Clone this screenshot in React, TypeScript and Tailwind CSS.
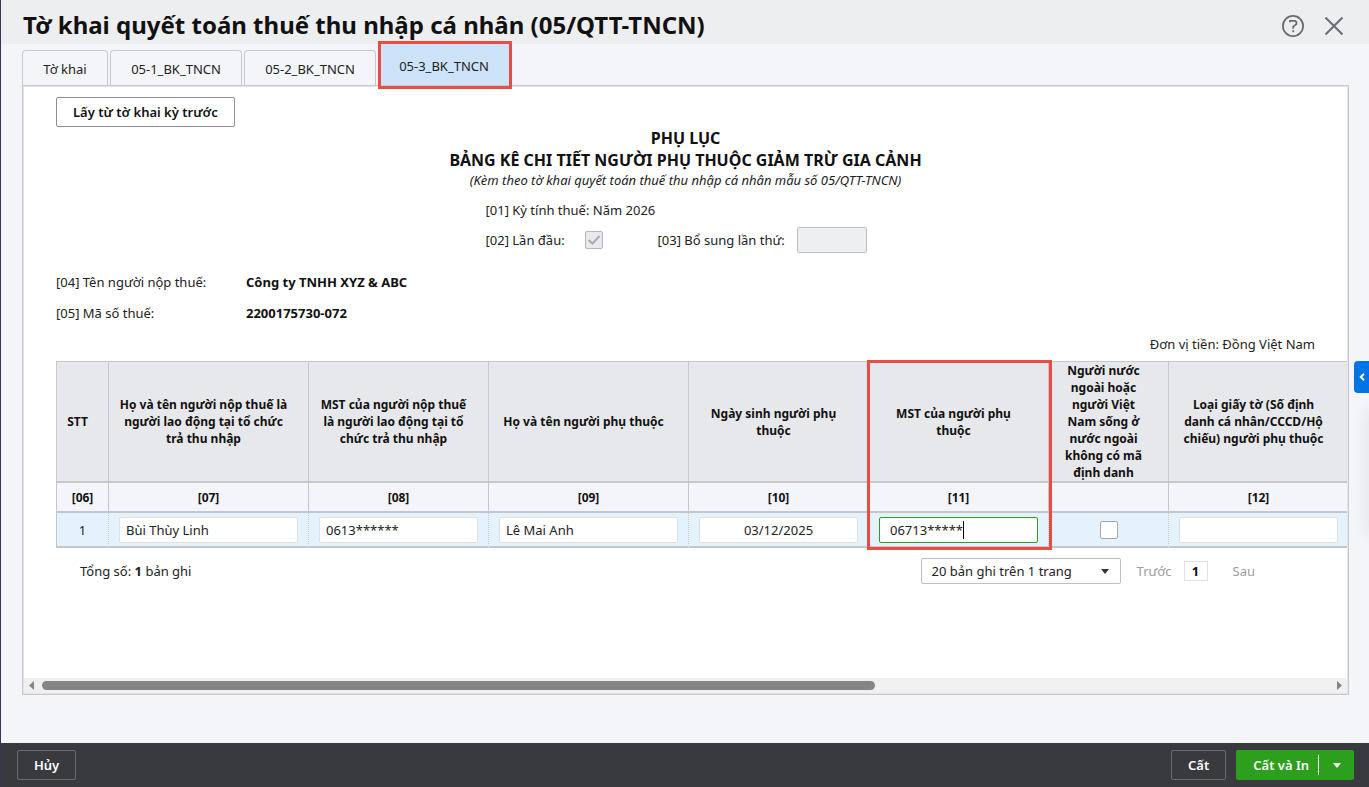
import { useState } from "react"
import { clsx } from "clsx"

const tabs = [
  { label: "Tờ khai", width: "w-[86px]" },
  { label: "05-1_BK_TNCN", width: "w-[132px]" },
  { label: "05-2_BK_TNCN", width: "w-[132px]" },
  { label: "05-3_BK_TNCN", width: "w-[132px]" },
]

const columns = [
  { title: "STT", code: "[06]", width: "w-[52px]" },
  { title: "Họ và tên người nộp thuế là người lao động tại tổ chức trả thu nhập", code: "[07]", width: "w-[200px]" },
  { title: "MST của người nộp thuế là người lao động tại tổ chức trả thu nhập", code: "[08]", width: "w-[180px]" },
  { title: "Họ và tên người phụ thuộc", code: "[09]", width: "w-[200px]" },
  { title: "Ngày sinh người phụ thuộc", code: "[10]", width: "w-[180px]" },
  { title: "MST của người phụ thuộc", code: "[11]", width: "w-[180px]" },
  {
    title: "Người nước ngoài hoặc người Việt Nam sống ở nước ngoài không có mã định danh",
    code: "",
    width: "w-[120px]",
  },
  {
    title: "Loại giấy tờ (Số định danh cá nhân/CCCD/Hộ chiếu) người phụ thuộc",
    code: "[12]",
    width: "w-[180px]",
  },
]

function Header() {
  return (
    <header className="flex h-11 items-center justify-between bg-[#edeef0] pr-6 pl-[22px]">
      <h1 className="pt-1.5 text-2xl font-bold text-[#111]">Tờ khai quyết toán thuế thu nhập cá nhân (05/QTT-TNCN)</h1>
      <div className="flex items-center gap-[18px] pt-2 text-[#6b6c72]">
        <button type="button" aria-label="Trợ giúp">
          <svg width="24" height="24" viewBox="0 0 24 24" fill="none" stroke="currentColor" strokeWidth="1.8">
            <circle cx="12" cy="12" r="10.1" />
            <path d="M9 8.2V6.9h5.2l1.2 1.2v2L12.2 12.6v2.2" />
            <path d="M12.2 16.2v2" />
          </svg>
        </button>
        <button type="button" aria-label="Đóng">
          <svg width="22" height="24" viewBox="0 0 22 24" fill="none" stroke="currentColor" strokeWidth="2">
            <path d="M2.5 3.5l17 17M19.5 3.5l-17 17" />
          </svg>
        </button>
      </div>
    </header>
  )
}

function Tabs({ active, onChange }: { active: number; onChange: (index: number) => void }) {
  return (
    <nav className="flex h-[41px] items-end gap-[2px]">
      {tabs.map((tab, index) => (
        <button
          key={tab.label}
          type="button"
          onClick={() => onChange(index)}
          className={clsx(
            "relative",
            tab.width,
            index === active
              ? "h-[41px] bg-[#cce3f9] pt-0.5"
              : "h-[35px] rounded-t-sm border border-b-0 border-[#c7c9cd] pt-px",
          )}
        >
          {tab.label}
          {index === active && (
            <span className="absolute -top-[3px] -right-[2px] -bottom-1 left-0 z-10 border-3 border-[#e94b45]" />
          )}
        </button>
      ))}
    </nav>
  )
}

function CellInput({ label, value, className }: { label: string; value: string; className?: string }) {
  return (
    <input
      aria-label={label}
      defaultValue={value}
      className={clsx("block h-[26px] w-full rounded-xs border bg-white outline-none", className ?? "border-[#e0e0e0] px-1.5")}
    />
  )
}

function DependentsTable() {
  const cell = "border-b-2 border-l border-b-[#c7c7c7] border-l-[#c7c7c7] p-0 px-2.5 [border-left-style:dotted]"

  return (
    <div className="relative w-[1292px]">
      <table className="w-full table-fixed border-separate border-spacing-0">
        <thead className="text-xs leading-[17px] font-bold text-[#111]">
          <tr className="h-[122px] bg-[#e7e8eb]">
            {columns.map((column) => (
              <th
                key={column.title}
                className={clsx("border-t border-b-2 border-l border-[#c7c7c7] p-0 pr-5 pl-2.5 align-middle", column.width)}
              >
                {column.title}
              </th>
            ))}
          </tr>
          <tr className="h-[30px] bg-[#f4f5fa]">
            {columns.map((column) => (
              <th key={column.title} className="border-b-2 border-l border-[#c7c7c7] p-0">
                {column.code}
              </th>
            ))}
          </tr>
        </thead>
        <tbody>
          <tr className="h-[35px] bg-[#e4f2fd]">
            <td className="border-b-2 border-l border-[#c7c7c7] p-0 text-center">1</td>
            <td className={cell}>
              <CellInput label={columns[1].title} value="Bùi Thùy Linh" />
            </td>
            <td className={cell}>
              <CellInput label={columns[2].title} value="0613******" />
            </td>
            <td className={cell}>
              <CellInput label={columns[3].title} value="Lê Mai Anh" />
            </td>
            <td className={cell}>
              <CellInput
                label={columns[4].title}
                value="03/12/2025"
                className="border-[#e0e0e0] px-1.5 text-center"
              />
            </td>
            <td className={cell}>
              <div className="relative">
                <CellInput
                  label={columns[5].title}
                  value="06713*****"
                  className="rounded-sm border-[#2ca01c] px-2.5"
                />
                <span className="absolute top-1 left-[84px] h-[18px] w-px bg-black" />
              </div>
            </td>
            <td className={cell}>
              <input
                type="checkbox"
                aria-label={columns[6].title}
                className="mx-auto block size-[18px] appearance-none rounded-xs border border-[#a6a8ad] bg-white"
              />
            </td>
            <td className={cell}>
              <CellInput label={columns[7].title} value="" />
            </td>
          </tr>
        </tbody>
      </table>
      {/* highlight around column [11] */}
      <div className="pointer-events-none absolute -top-px -bottom-[2px] left-[811px] w-[185px] border-3 border-[#e94b45]" />
    </div>
  )
}

function Pager() {
  return (
    <div className="flex h-[26px] items-center justify-between pr-[60px] pl-6">
      <p>
        Tổng số: <b>1</b> bản ghi
      </p>
      <div className="flex items-center text-[#9b9da2]">
        <div className="relative mr-4">
          <select
            aria-label="Số bản ghi trên trang"
            className="block h-[26px] w-[200px] appearance-none rounded-xs border border-[#babec5] bg-white px-2.5 text-[#222]"
          >
            <option>20 bản ghi trên 1 trang</option>
          </select>
          <svg className="pointer-events-none absolute top-[11px] right-3 text-[#333]" width="8" height="5" viewBox="0 0 8 5">
            <path d="M0 0h8L4 5z" fill="currentColor" />
          </svg>
        </div>
        <button type="button">Trước</button>
        <button
          type="button"
          className="mr-[25px] ml-3 flex h-5 w-6 items-center justify-center border border-[#e0e0e0] font-bold text-[#111]"
        >
          1
        </button>
        <button type="button">Sau</button>
      </div>
    </div>
  )
}

function ScrollBar() {
  return (
    <div className="flex h-[15px] items-center bg-[#f0f0f0] px-[5px] text-[#858585]">
      <svg width="5" height="9" viewBox="0 0 5 9">
        <path d="M5 0v9L0 4.5z" fill="currentColor" />
      </svg>
      <div className="mx-2 flex-1">
        <div className="h-[9px] w-[64.7%] rounded-full bg-[#858585]" />
      </div>
      <svg width="5" height="9" viewBox="0 0 5 9">
        <path d="M0 0v9l5-4.5z" fill="currentColor" />
      </svg>
    </div>
  )
}

function Appendix() {
  return (
    <section className="flex flex-1 flex-col border border-[#c7c9cd] bg-white">
      <div className="flex flex-1 flex-col border border-[#e3e4e7]">
        <div className="flex-1 overflow-hidden px-8 pt-2.5 pb-6">
          <button type="button" className="block h-[30px] rounded-xs border border-[#8d9096] px-4 font-semibold text-[#111]">
            Lấy từ tờ khai kỳ trước
          </button>

          <div className="text-center">
            <h2 className="text-base leading-[22px] font-bold text-[#111]">
              PHỤ LỤC
              <br />
              BẢNG KÊ CHI TIẾT NGƯỜI PHỤ THUỘC GIẢM TRỪ GIA CẢNH
            </h2>
            <p className="leading-[18px] italic">(Kèm theo tờ khai quyết toán thuế thu nhập cá nhân mẫu số 05/QTT-TNCN)</p>
          </div>

          <div className="mx-auto mt-[11px] w-[400px]">
            <p>[01] Kỳ tính thuế: Năm 2026</p>
            <div className="mt-[7px] flex h-[26px] items-center">
              <label htmlFor="first-time" className="w-[99px]">
                [02] Lần đầu:
              </label>
              <div className="relative w-[73px]">
                <input
                  id="first-time"
                  type="checkbox"
                  defaultChecked
                  disabled
                  className="block size-[18px] appearance-none rounded-xs border border-[#b3b5ba] bg-[#e9eaed]"
                />
                <svg
                  className="pointer-events-none absolute top-0 left-0"
                  width="18"
                  height="18"
                  viewBox="0 0 18 18"
                  fill="none"
                  stroke="#a9abaf"
                  strokeWidth="2"
                >
                  <path d="M3.5 9l4 3.5L14.5 5" />
                </svg>
              </div>
              <label htmlFor="supplement" className="w-[139px]">
                [03] Bổ sung lần thứ:
              </label>
              <input id="supplement" disabled className="h-[26px] w-[70px] rounded-xs border border-[#babec5] bg-[#eeeff1]" />
            </div>
          </div>

          <dl className="mt-[19px] grid grid-cols-[190px_1fr] gap-y-[11px]">
            <dt>[04] Tên người nộp thuế:</dt>
            <dd className="font-bold text-[#111]">Công ty TNHH XYZ &amp; ABC</dd>
            <dt>[05] Mã số thuế:</dt>
            <dd className="font-bold text-[#111]">2200175730-072</dd>
          </dl>

          <p className="mt-[11px] mb-[7px] text-right">Đơn vị tiền: Đồng Việt Nam</p>
          <DependentsTable />
          <div className="mt-2.5">
            <Pager />
          </div>
        </div>
        <ScrollBar />
      </div>
    </section>
  )
}

function Footer() {
  return (
    <footer className="flex h-11 items-center justify-between bg-[#393a3d] pr-[15px] pl-4 font-semibold text-white">
      <button type="button" className="h-[30px] rounded-xs border border-[#6b6c72] px-4">
        Hủy
      </button>
      <div className="flex gap-2.5">
        <button type="button" className="h-[30px] rounded-xs border border-[#6b6c72] px-4">
          Cất
        </button>
        <div className="flex h-[30px] items-center rounded-xs bg-[#2ca01c]">
          <button type="button" className="h-5 border-r border-white pr-[9px] pl-[17px]">
            Cất và In
          </button>
          <button type="button" aria-label="Tùy chọn khác" className="flex h-full w-[35px] items-center justify-center">
            <svg width="8" height="5" viewBox="0 0 8 5">
              <path d="M0 0h8L4 5z" fill="currentColor" />
            </svg>
          </button>
        </div>
      </div>
    </footer>
  )
}

export default function App() {
  const [activeTab, setActiveTab] = useState(3)

  return (
    <div className="relative flex min-h-screen flex-col overflow-hidden border-l border-[#343a4d] bg-[#f3f5f9] font-['Noto_Sans',sans-serif] text-[13px] leading-5 text-[#222]">
      <Header />
      <main className="flex flex-1 flex-col pr-5 pb-12 pl-[21px]">
        <Tabs active={activeTab} onChange={setActiveTab} />
        <Appendix />
      </main>
      <Footer />

      <div className="absolute top-[410px] -right-1 h-[125px] w-1 shadow-[0_0_16px_rgba(0,0,0,0.2)]" />
      <button
        type="button"
        aria-label="Mở rộng"
        className="absolute top-[361px] right-0 flex h-8 w-[15px] items-center justify-center rounded-l-sm bg-[#0073e6] text-white"
      >
        <svg width="6" height="8" viewBox="0 0 6 8" fill="none" stroke="currentColor" strokeWidth="2">
          <path d="M5 .8L1.8 4 5 7.2" />
        </svg>
      </button>
    </div>
  )
}
